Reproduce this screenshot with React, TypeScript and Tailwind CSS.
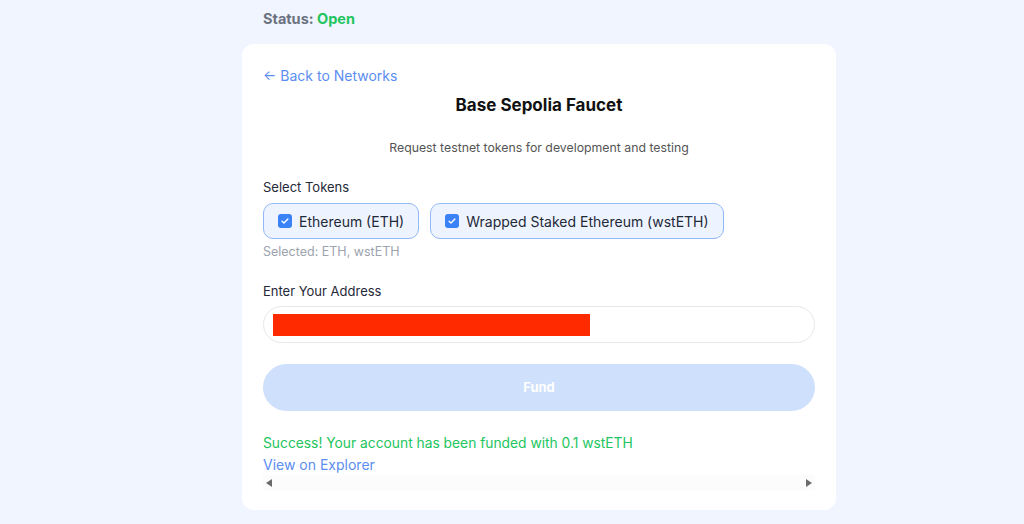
import React from 'react';

const tokens = ['Ethereum (ETH)', 'Wrapped Staked Ethereum (wstETH)'];

const CheckBox = () => (
  <span className="flex h-[14px] w-[14px] items-center justify-center rounded-[3px] bg-[#3b82f6]">
    <svg viewBox="0 0 12 12" className="h-[10px] w-[10px]" fill="none">
      <path d="M2.5 6.2l2.3 2.3 4.7-4.9" stroke="white" strokeWidth="1.6" strokeLinecap="round" strokeLinejoin="round" />
    </svg>
  </span>
);

export default function App() {
  return (
    <div
      className="min-h-[524px] bg-[#f0f5ff] text-[#111827]"
      style={{ fontFamily: 'Inter, "Noto Sans", sans-serif' }}
    >
      <div className="ml-[242px] w-[594px]">
        {/* Status */}
        <div className="pl-[21px] pt-[9px] text-[14.5px] font-bold leading-5 text-[#6b7280]">
          Status: <span className="text-[#22c55e]">Open</span>
        </div>

        {/* Card */}
        <div className="mt-[15px] rounded-xl bg-white px-[21px] pb-[20px] pt-[22px]">
          <a className="block text-[14px] leading-5 text-[#5b8ef0]">← Back to Networks</a>
          <h1 className="mt-[7px] text-center text-[17px] font-bold leading-6 text-[#111]">Base Sepolia Faucet</h1>
          <p className="mt-[21px] text-center text-[12.3px] leading-5 text-[#555]">
            Request testnet tokens for development and testing
          </p>

          <div className="mt-[19px] text-[13px] leading-5 text-[#1f2937]">Select Tokens</div>
          <div className="mt-[6px] flex gap-[11px]">
            {tokens.map((t) => (
              <div
                key={t}
                className="flex h-9 items-center gap-[7px] rounded-[10px] border border-[#93b8f7] bg-[#eef4ff] pl-[14px] pr-[14px]"
              >
                <CheckBox />
                <span className="text-[14px] text-[#1f2937]">{t}</span>
              </div>
            ))}
          </div>
          <div className="mt-[5px] text-[12.5px] leading-4 text-[#9ca3af]">Selected: ETH, wstETH</div>

          <div className="mt-[21px] text-[13px] leading-5 text-[#1f2937]">Enter Your Address</div>
          <div className="mt-[5px] flex h-[37px] items-center rounded-full border border-[#e5e7eb] bg-white pl-[9px]">
            <div className="h-[22px] w-[317px] bg-[#ff2a00]" />
          </div>

          <button className="mt-[21px] h-[47px] w-full rounded-full bg-[#cfe0fd] text-[13px] font-bold text-white">
            Fund
          </button>

          <div className="mt-[22px] text-[13.8px] leading-5 text-[#22c55e]">
            Success! Your account has been funded with 0.1 wstETH
          </div>
          <a className="mt-[2px] block text-[14px] leading-5 text-[#5b8ef0]">View on Explorer</a>

          {/* horizontal scrollbar */}
          <div className="flex h-[15px] items-center justify-between bg-[#fcfcfc] px-[3px]">
            <svg viewBox="0 0 6 8" className="h-2 w-[6px]">
              <path d="M6 0v8L0 4z" fill="#6b6b6b" />
            </svg>
            <svg viewBox="0 0 6 8" className="h-2 w-[6px]">
              <path d="M0 0v8l6-4z" fill="#6b6b6b" />
            </svg>
          </div>
        </div>
      </div>
    </div>
  );
}
